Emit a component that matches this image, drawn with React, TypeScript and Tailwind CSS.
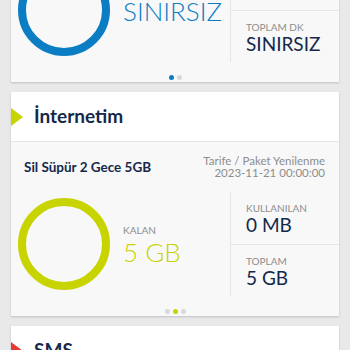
import React from 'react';

type Cell = { label: string; value: string };

interface CardProps {
  title: string;
  accent: string; // tailwind border-l colour class for the triangle
  ringStroke: string;
  packageName: string;
  leftLabel?: string;
  leftValue: string;
  leftValueColor: string;
  cells: Cell[];
  dots: number;
  activeDot: number;
  activeDotColor: string;
  className?: string;
}

function Ring({ stroke }: { stroke: string }) {
  return (
    <svg width="92" height="92" viewBox="0 0 92 92" className="shrink-0">
      <circle cx="46" cy="46" r="42" fill="none" strokeWidth="8" className={stroke} />
    </svg>
  );
}

function CardHeader({ title, accent }: { title: string; accent: string }) {
  return (
    <div className="flex h-[50px] items-center border-b border-[#e6e6e6] bg-white">
      <span className={`h-0 w-0 border-y-[9px] border-l-[12px] border-y-transparent ${accent}`} />
      <span className="ml-[11px] text-[19px] font-bold text-[#14284b]">{title}</span>
    </div>
  );
}

function UsageCard(props: CardProps) {
  return (
    <div className={`bg-[#f8f8f8] shadow-[0_1px_2px_rgba(0,0,0,0.18)] ${props.className ?? ''}`}>
      <CardHeader title={props.title} accent={props.accent} />

      <div className="flex h-[50px] items-center justify-between pl-[13px] pr-[14px]">
        <span className="text-[13.5px] font-bold text-[#14284b]">{props.packageName}</span>
        <div className="text-right text-[11.5px] leading-[12.5px] text-[#8d8d8d]">
          <div>Tarife / Paket Yenilenme</div>
          <div>2023-11-21 00:00:00</div>
        </div>
      </div>

      <div className="flex h-[104px]">
        <div className="flex w-[219px] items-center pl-[7px]">
          <Ring stroke={props.ringStroke} />
          <div className="ml-[13px] pt-[1px]">
            {props.leftLabel && (
              <div className="mb-[3px] text-[10px] leading-[11px] text-[#8d8d8d]">{props.leftLabel}</div>
            )}
            <div className={`text-[26px] font-light leading-[26px] ${props.leftValueColor}`}>
              {props.leftValue}
            </div>
          </div>
        </div>
        <div className="flex flex-1 flex-col border-l border-[#e6e6e6]">
          {props.cells.map((c, i) => (
            <div
              key={c.label}
              className={`flex-1 pl-[15px] pt-[10px] ${i === 0 ? 'border-b border-[#e6e6e6]' : ''}`}
            >
              <div className="text-[10px] leading-[12px] text-[#8d8d8d]">{c.label}</div>
              <div className="text-[19px] leading-[22px] text-[#14284b]">{c.value}</div>
            </div>
          ))}
        </div>
      </div>

      <div className="flex h-[20px] items-start justify-center gap-[3px] pt-[13px]">
        {Array.from({ length: props.dots }).map((_, i) => (
          <span
            key={i}
            className={`h-[5px] w-[5px] rounded-full ${i === props.activeDot ? props.activeDotColor : 'bg-[#d9d9de]'}`}
          />
        ))}
      </div>
    </div>
  );
}

export default function App() {
  return (
    <div className="h-[350px] w-[350px] overflow-hidden bg-[#e9e9e9] font-['Lato',sans-serif]">
      <div className="flex flex-col gap-[10px] px-[11px]">
        <UsageCard
          className="-mt-[142px]"
          title="Konuşmalarım"
          accent="border-l-[#0b7dc3]"
          ringStroke="stroke-[#0b7dc3]"
          packageName="Sil Süpür 2 Gece 5GB"
          leftValue="SINIRSIZ"
          leftValueColor="text-[#0b7dc3]"
          cells={[
            { label: 'KULLANILAN', value: '0 DK' },
            { label: 'TOPLAM DK', value: 'SINIRSIZ' },
          ]}
          dots={2}
          activeDot={0}
          activeDotColor="bg-[#0b7dc3]"
        />
        <UsageCard
          title="İnternetim"
          accent="border-l-[#c8d400]"
          ringStroke="stroke-[#c8d400]"
          packageName="Sil Süpür 2 Gece 5GB"
          leftLabel="KALAN"
          leftValue="5 GB"
          leftValueColor="text-[#c8d400]"
          cells={[
            { label: 'KULLANILAN', value: '0 MB' },
            { label: 'TOPLAM', value: '5 GB' },
          ]}
          dots={3}
          activeDot={1}
          activeDotColor="bg-[#c8d400]"
        />
        <div className="bg-[#f8f8f8] shadow-[0_1px_2px_rgba(0,0,0,0.18)]">
          <CardHeader title="SMS" accent="border-l-[#e53935]" />
          <div className="h-[150px]" />
        </div>
      </div>
    </div>
  );
}
